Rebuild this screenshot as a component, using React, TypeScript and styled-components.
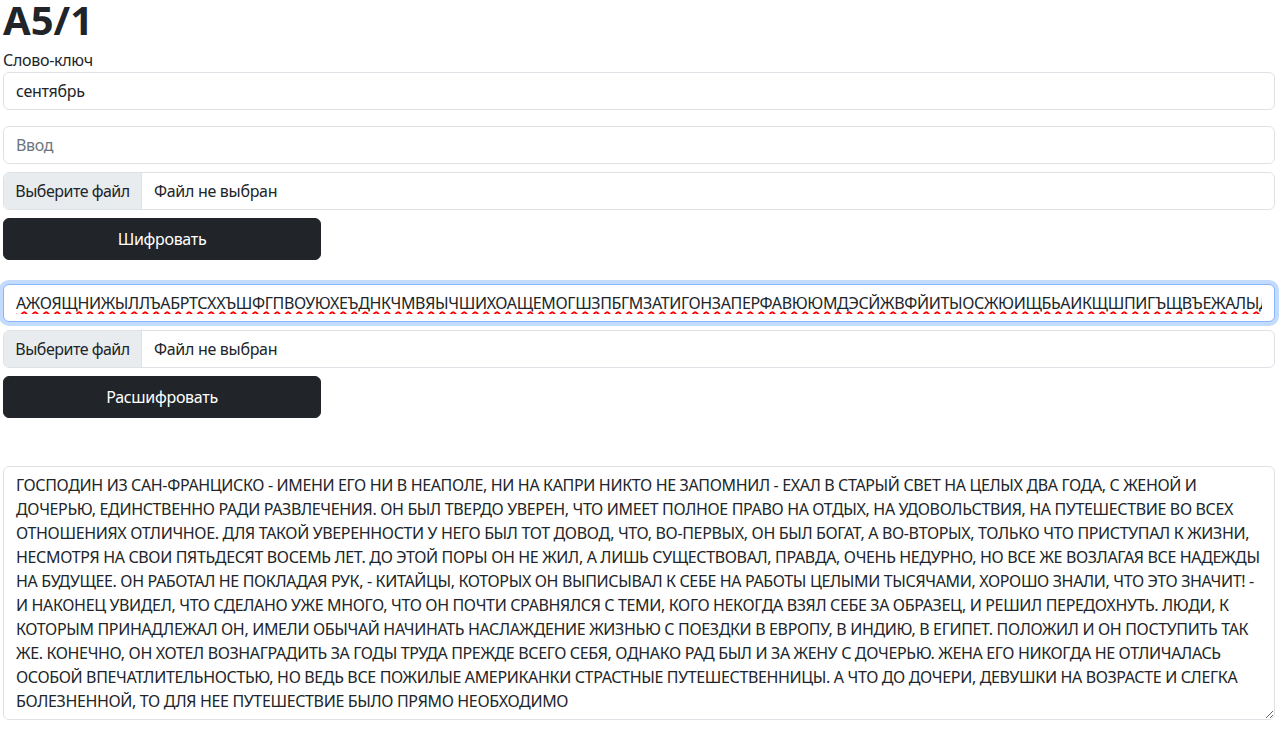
import React, { useEffect, useRef } from "react";
import styled, { createGlobalStyle, css } from "styled-components";

const GlobalStyle = createGlobalStyle`
  *, *::before, *::after { box-sizing: border-box; }
  body {
    margin: 0;
    font-family: "Noto Sans", "Open Sans", sans-serif;
    font-size: 16px;
    line-height: 24px;
    color: #212529;
    background: #ffffff;
    letter-spacing: -0.3px;
  }
`;

const Page = styled.main`
  display: flex;
  flex-direction: column;
  padding: 0 9px 0 3px;
`;

const Title = styled.h1`
  margin: 0 0 8px;
  font-size: 40px;
  line-height: 40px;
  font-weight: 700;
  letter-spacing: 0;
  color: #212529;
`;

const Section = styled.section<{ $gap: number; $top?: number }>`
  display: flex;
  flex-direction: column;
  gap: ${p => p.$gap}px;
  margin-top: ${p => p.$top ?? 0}px;
`;

const FieldLabel = styled.label`
  display: block;
  line-height: 24px;
`;

const TextInput = styled.input<{ $focused?: boolean; $misspelled?: boolean }>`
  display: block;
  width: 100%;
  height: 38px;
  padding: 6px 12px;
  font: inherit;
  letter-spacing: inherit;
  color: #212529;
  background: #fff;
  border: 1px solid #dee2e6;
  border-radius: 6px;
  outline: none;
  caret-color: #212529;
  &::placeholder { color: #6c757d; opacity: 1; }
  ${p => p.$focused && css`
    border-color: #86b7fe;
    box-shadow: 0 0 0 4px rgba(13, 110, 253, 0.25);
  `}
  ${p => p.$misspelled && css`
    letter-spacing: -0.35px;
    text-decoration-line: underline;
    text-decoration-style: wavy;
    text-decoration-color: #ff0000;
    text-decoration-thickness: 1.5px;
    text-underline-offset: 2px;
    text-decoration-skip-ink: none;
  `}
`;

const FileBox = styled.label`
  display: flex;
  align-items: stretch;
  height: 38px;
  border: 1px solid #dee2e6;
  border-radius: 6px;
  overflow: hidden;
  background: #fff;
  cursor: pointer;
  input { display: none; }
`;

const FileButton = styled.span`
  display: flex;
  align-items: center;
  justify-content: center;
  width: 138px;
  flex: none;
  background: #e9ecef;
  border-right: 1px solid #dee2e6;
  color: #212529;
  letter-spacing: -0.5px;
`;

const FileName = styled.span`
  display: flex;
  align-items: center;
  padding-left: 12px;
  color: #212529;
`;

const DarkButton = styled.button`
  width: 318px;
  height: 42px;
  padding: 0;
  border: 1px solid #212529;
  border-radius: 6px;
  background: #212529;
  color: #fff;
  font: inherit;
  letter-spacing: inherit;
  cursor: pointer;
`;

const TextArea = styled.textarea`
  display: block;
  width: 100%;
  height: 254px;
  padding: 6px 12px;
  font: inherit;
  letter-spacing: -0.35px;
  line-height: 24px;
  color: #212529;
  background: #fff;
  border: 1px solid #dee2e6;
  border-radius: 6px;
  outline: none;
  resize: vertical;
  overflow: hidden;
  white-space: pre;
`;

const cipher =
  "АЖОЯЩНИЖЫЛЛЪАБРТСХХЪШФГПВОУЮХЕЪДНКЧМВЯЫЧШИХОАЩЕМОГШЗПБГМЗАТИГОНЗАПЕРФАВЮЮМДЭСЙЖВФЙИТЫОСЖЮИЩБЬАИКЩШПИГЪЩВЪЕЖАЛЫДЗУКЯЖЕНПЩЬЛОВФЮЦЧРЫГЕТ";

const plain = [
  "ГОСПОДИН ИЗ САН-ФРАНЦИСКО - ИМЕНИ ЕГО НИ В НЕАПОЛЕ, НИ НА КАПРИ НИКТО НЕ ЗАПОМНИЛ - ЕХАЛ В СТАРЫЙ СВЕТ НА ЦЕЛЫХ ДВА ГОДА, С ЖЕНОЙ И",
  "ДОЧЕРЬЮ, ЕДИНСТВЕННО РАДИ РАЗВЛЕЧЕНИЯ. ОН БЫЛ ТВЕРДО УВЕРЕН, ЧТО ИМЕЕТ ПОЛНОЕ ПРАВО НА ОТДЫХ, НА УДОВОЛЬСТВИЯ, НА ПУТЕШЕСТВИЕ ВО ВСЕХ",
  "ОТНОШЕНИЯХ ОТЛИЧНОЕ. ДЛЯ ТАКОЙ УВЕРЕННОСТИ У НЕГО БЫЛ ТОТ ДОВОД, ЧТО, ВО-ПЕРВЫХ, ОН БЫЛ БОГАТ, А ВО-ВТОРЫХ, ТОЛЬКО ЧТО ПРИСТУПАЛ К ЖИЗНИ,",
  "НЕСМОТРЯ НА СВОИ ПЯТЬДЕСЯТ ВОСЕМЬ ЛЕТ. ДО ЭТОЙ ПОРЫ ОН НЕ ЖИЛ, А ЛИШЬ СУЩЕСТВОВАЛ, ПРАВДА, ОЧЕНЬ НЕДУРНО, НО ВСЕ ЖЕ ВОЗЛАГАЯ ВСЕ НАДЕЖДЫ",
  "НА БУДУЩЕЕ. ОН РАБОТАЛ НЕ ПОКЛАДАЯ РУК, - КИТАЙЦЫ, КОТОРЫХ ОН ВЫПИСЫВАЛ К СЕБЕ НА РАБОТЫ ЦЕЛЫМИ ТЫСЯЧАМИ, ХОРОШО ЗНАЛИ, ЧТО ЭТО ЗНАЧИТ! -",
  "И НАКОНЕЦ УВИДЕЛ, ЧТО СДЕЛАНО УЖЕ МНОГО, ЧТО ОН ПОЧТИ СРАВНЯЛСЯ С ТЕМИ, КОГО НЕКОГДА ВЗЯЛ СЕБЕ ЗА ОБРАЗЕЦ, И РЕШИЛ ПЕРЕДОХНУТЬ. ЛЮДИ, К",
  "КОТОРЫМ ПРИНАДЛЕЖАЛ ОН, ИМЕЛИ ОБЫЧАЙ НАЧИНАТЬ НАСЛАЖДЕНИЕ ЖИЗНЬЮ С ПОЕЗДКИ В ЕВРОПУ, В ИНДИЮ, В ЕГИПЕТ. ПОЛОЖИЛ И ОН ПОСТУПИТЬ ТАК",
  "ЖЕ. КОНЕЧНО, ОН ХОТЕЛ ВОЗНАГРАДИТЬ ЗА ГОДЫ ТРУДА ПРЕЖДЕ ВСЕГО СЕБЯ, ОДНАКО РАД БЫЛ И ЗА ЖЕНУ С ДОЧЕРЬЮ. ЖЕНА ЕГО НИКОГДА НЕ ОТЛИЧАЛАСЬ",
  "ОСОБОЙ ВПЕЧАТЛИТЕЛЬНОСТЬЮ, НО ВЕДЬ ВСЕ ПОЖИЛЫЕ АМЕРИКАНКИ СТРАСТНЫЕ ПУТЕШЕСТВЕННИЦЫ. А ЧТО ДО ДОЧЕРИ, ДЕВУШКИ НА ВОЗРАСТЕ И СЛЕГКА",
  "БОЛЕЗНЕННОЙ, ТО ДЛЯ НЕЕ ПУТЕШЕСТВИЕ БЫЛО ПРЯМО НЕОБХОДИМО",
].join("\n");

function FilePicker() {
  return (
    <FileBox>
      <input type="file" />
      <FileButton>Выберите файл</FileButton>
      <FileName>Файл не выбран</FileName>
    </FileBox>
  );
}

export default function App() {
  const cipherRef = useRef<HTMLInputElement>(null);
  useEffect(() => {
    const el = cipherRef.current;
    if (el) {
      el.focus();
      el.setSelectionRange(0, 0);
      el.scrollLeft = 0;
    }
  }, []);

  return (
    <>
      <GlobalStyle />
      <Page>
        <Title>A5/1</Title>
        <Section $gap={0}>
          <FieldLabel htmlFor="key">Слово-ключ</FieldLabel>
          <TextInput id="key" defaultValue="сентябрь" />
        </Section>

        <Section $gap={8} $top={16}>
          <TextInput placeholder="Ввод" />
          <FilePicker />
          <DarkButton type="button">Шифровать</DarkButton>
        </Section>

        <Section $gap={8} $top={24}>
          <TextInput ref={cipherRef} defaultValue={cipher} $focused $misspelled spellCheck={false} />
          <FilePicker />
          <DarkButton type="button">Расшифровать</DarkButton>
        </Section>

        <Section $gap={0} $top={48}>
          <TextArea defaultValue={plain} spellCheck={false} wrap="off" />
        </Section>
      </Page>
    </>
  );
}
